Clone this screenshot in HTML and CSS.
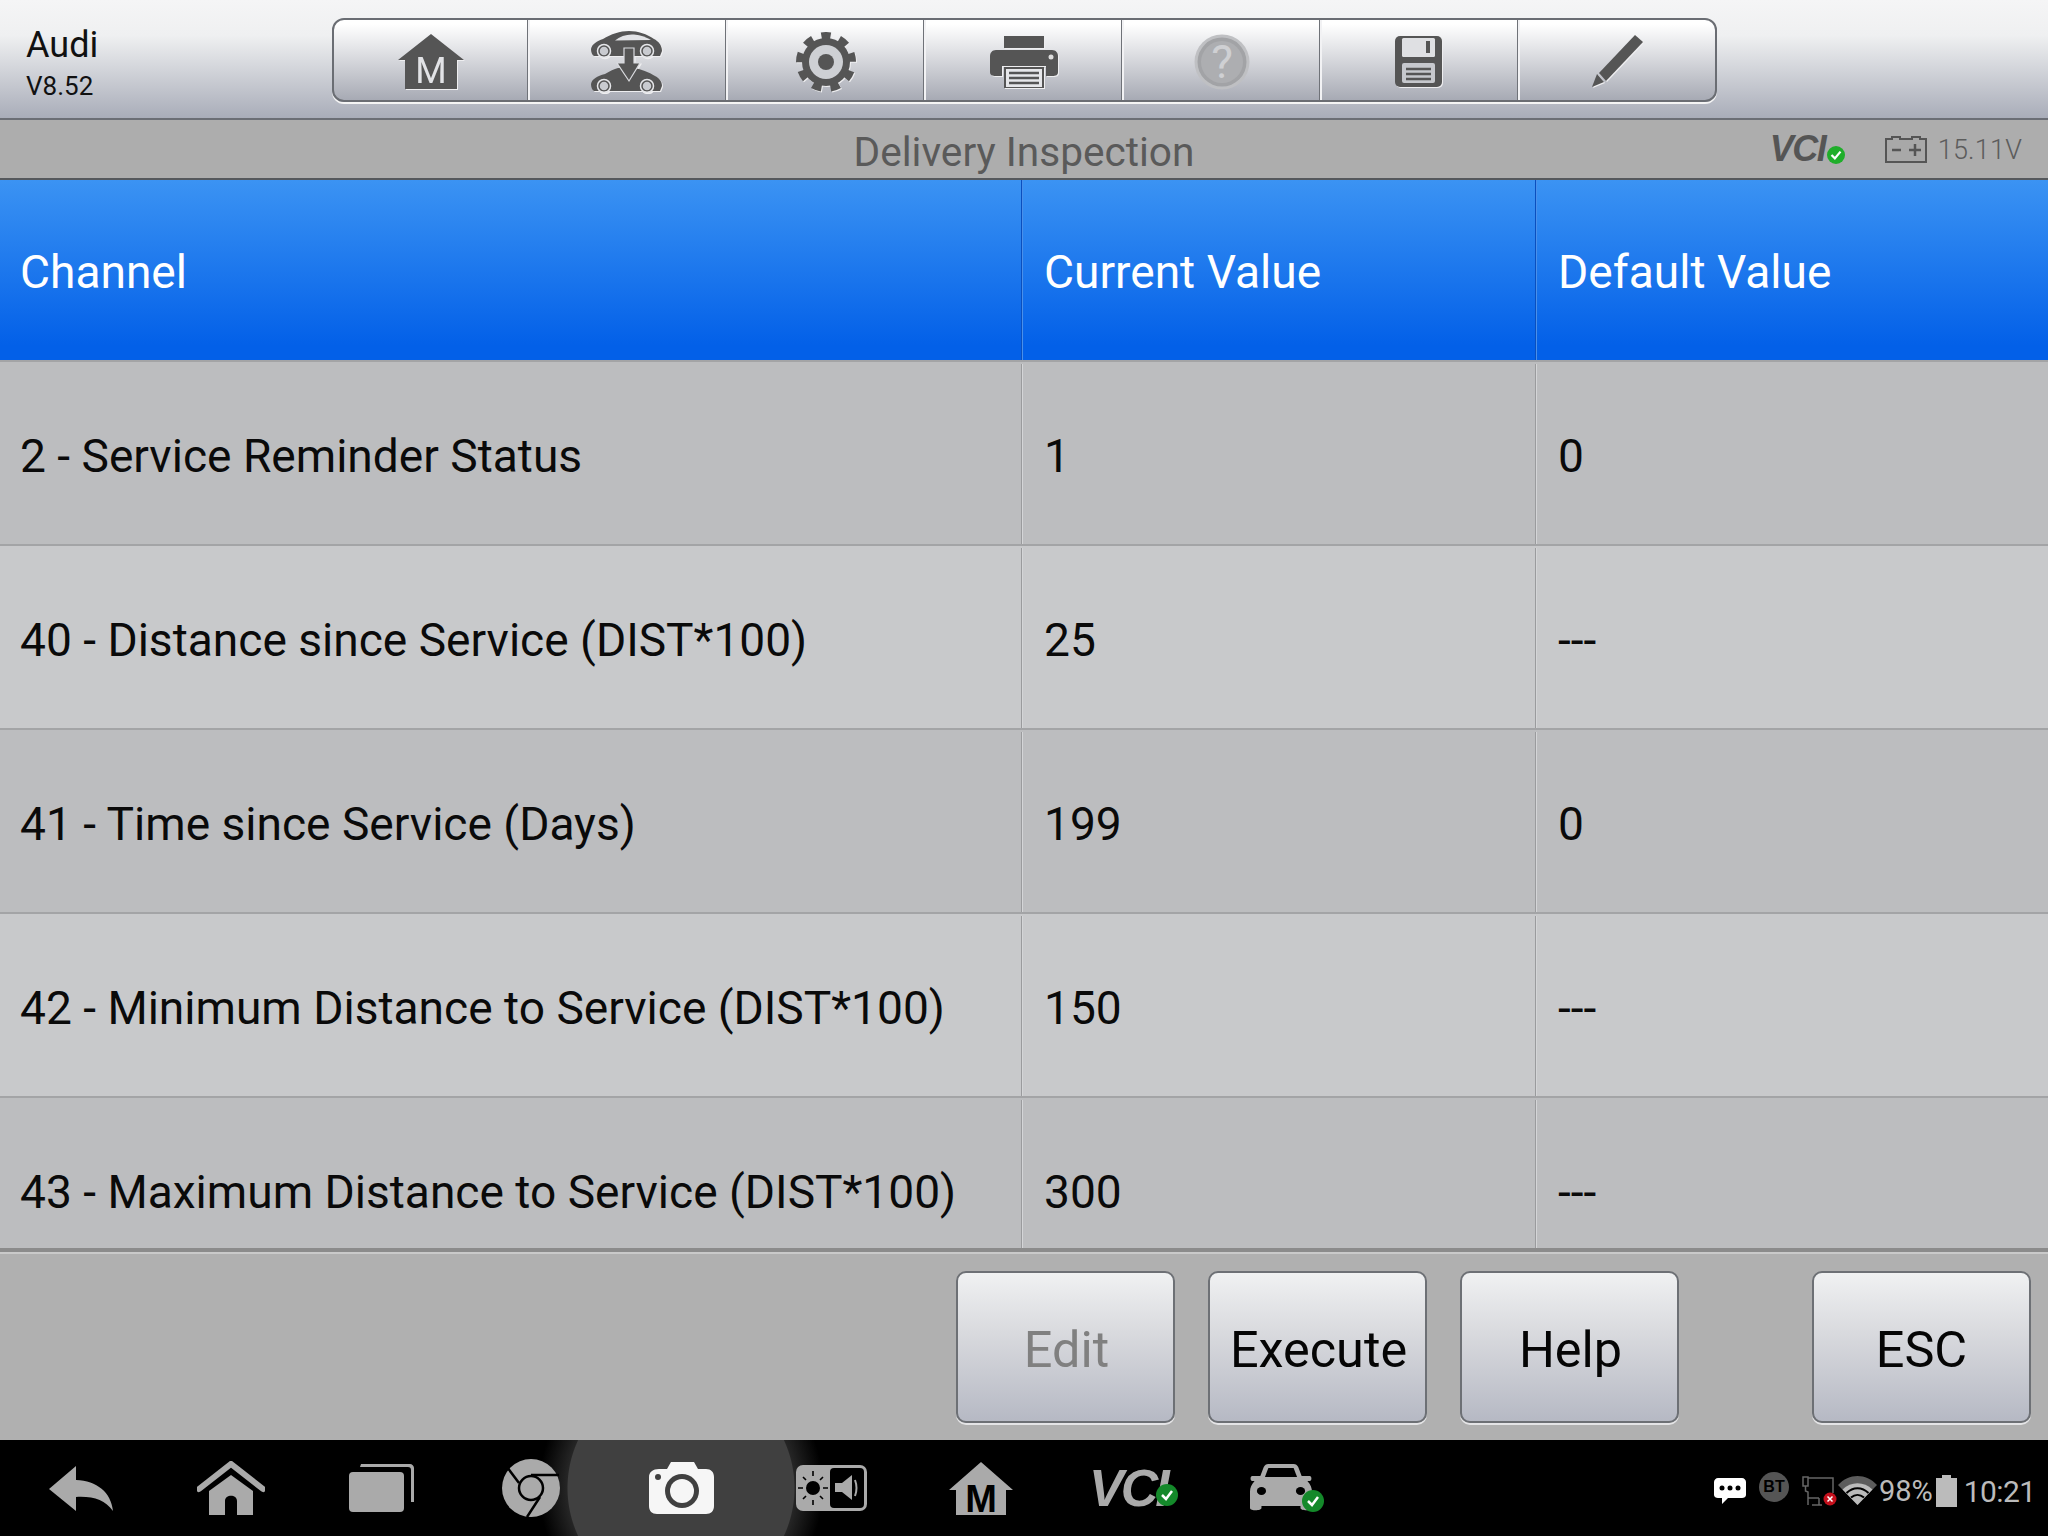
FILE: index.html
```html
<!DOCTYPE html>
<html lang="en">
<head>
<meta charset="utf-8">
<title>Delivery Inspection</title>
<link rel="stylesheet" href="styles.css">
</head>
<body>
<div class="screen">
  <header class="topbar">
    <div class="brand"><div class="brand-name">Audi</div><div class="brand-ver">V8.52</div></div>
    <div class="toolbar">
      <div class="tool"><svg class="emboss" width="66" height="64" viewBox="0 0 66 64"><path d="M33 0 L66 26 H59 V55 H7 V26 H0 Z" fill="#555"/><text x="33" y="49" text-anchor="middle" class="m-light">M</text></svg></div>
      <div class="tool"><svg class="emboss nudge" width="72" height="62" viewBox="0 0 72 62"><g fill="#555"><path d="M0 18 C1 13 6 10 12 8 C20 3 29 0 38 0 C47 0 56 3 63 8 C67 10 71 14 71 20 L69 25 H3 C1 24 0 21 0 18 Z"/><path d="M0 53 C1 48 6 45 14 43 C19 40 23 38 27 37 L42 37 C50 38 58 41 64 45 C68 47 71 50 71 55 L69 60 H3 C1 59 0 56 0 53 Z"/></g><path d="M24 9.500 C29 5 36 3 43 3.500 C50 4 56 6.500 60 9 Z" fill="#e2e3e6"/><g fill="#c9cbd0" stroke="#555" stroke-width="1.500"><circle cx="13" cy="20" r="5"/><circle cx="56" cy="20" r="5"/><circle cx="13" cy="55" r="5"/><circle cx="56" cy="55" r="5"/></g><g fill="none" stroke="#e6e7ea" stroke-width="1.500"><circle cx="13" cy="20" r="6.500"/><circle cx="56" cy="20" r="6.500"/><circle cx="13" cy="55" r="6.500"/><circle cx="56" cy="55" r="6.500"/></g><path d="M33 17 H43 V32 H49 L38 50 L26 32 H33 Z" fill="#555" stroke="#dadbdf" stroke-width="1.200"/></svg></div>
      <div class="tool"><svg class="emboss" width="60" height="60" viewBox="0 0 60 60"><circle cx="30" cy="30" r="26.500" fill="none" stroke="#555" stroke-width="7" pathLength="9" stroke-dasharray=".5 .5" transform="rotate(-100 30 30)"/><circle cx="30" cy="30" r="24" fill="#555"/><circle cx="30" cy="30" r="17" fill="#ced0d4"/><circle cx="30" cy="30" r="8" fill="#555"/></svg></div>
      <div class="tool"><svg class="emboss" width="68" height="52" viewBox="0 0 68 52"><path d="M14 0 H54 V12 H14 Z" fill="#555"/><path d="M6 14 H62 C66 14 68 17 68 20 V36 C68 39 66 40 62 40 H56 V30 H12 V40 H6 C2 40 0 39 0 36 V20 C0 17 2 14 6 14 Z" fill="#555"/><circle cx="61" cy="21" r="2.500" fill="#ddd"/><path d="M15 32 H53 V52 H15 Z" fill="#e6e7ea" stroke="#555" stroke-width="2"/><path d="M19 37 H49 M19 42 H49 M19 47 H49" stroke="#555" stroke-width="2.500"/></svg></div>
      <div class="tool"><svg width="56" height="56" viewBox="0 0 56 56"><circle cx="28" cy="28" r="27.500" fill="#bfc0c3"/><circle cx="28" cy="28" r="24.500" fill="#a2a3a6"/><circle cx="28" cy="28" r="21" fill="#adaeb1"/><text x="28" y="44" text-anchor="middle" class="q-mark">?</text></svg></div>
      <div class="tool"><svg class="emboss nudge" width="47" height="51" viewBox="0 0 47 51"><rect width="47" height="51" rx="5" fill="#555"/><rect x="7" y="2" width="33" height="19" rx="1.500" fill="#dfe0e3"/><rect x="31" y="5" width="4" height="12" fill="#555"/><rect x="7" y="27" width="33" height="20" rx="2" fill="#c6c8cd"/><path d="M11 33 H36 M11 38 H36 M11 43 H36" stroke="#555" stroke-width="2.500"/></svg></div>
      <div class="tool"><svg class="emboss" width="52" height="53" viewBox="0 0 52 53"><path d="M43 0 L51 7 L14 46 L7 38 Z" fill="#555"/><path d="M5 39 L12 47 L0 52 Z" fill="#555"/></svg></div>
    </div>
  </header>

  <div class="titlebar">
    <div class="title">Delivery Inspection</div>
    <div class="vci-state">
      <span class="logo-wrap"><span class="vci-small">VCI</span><svg class="badge-sm" width="18" height="18" viewBox="0 0 16 16"><circle cx="8" cy="8" r="8" fill="#1fae2a"/><path d="M4 8 L7 11 L12 5" fill="none" stroke="#fff" stroke-width="2"/></svg></span>
      <svg width="42" height="27" viewBox="0 0 42 27"><path d="M7 1 H15 V3 H27 V1 H35 V3 H41 V26 H1 V3 H7 Z" fill="#a8a8a8" stroke="#555" stroke-width="2"/><path d="M7 14 H16 M24 14 H36 M30 8 V20" stroke="#555" stroke-width="2.500"/></svg>
      <span class="volts">15.11V</span>
    </div>
  </div>

  <div class="grid head">
    <div class="cell">Channel</div><div class="cell">Current Value</div><div class="cell">Default Value</div>
  </div>

  <main class="rows">
    <div class="grid row"><div class="cell">2 - Service Reminder Status</div><div class="cell">1</div><div class="cell">0</div></div>
    <div class="grid row alt"><div class="cell">40 - Distance since Service (DIST*100)</div><div class="cell">25</div><div class="cell">---</div></div>
    <div class="grid row"><div class="cell">41 - Time since Service (Days)</div><div class="cell">199</div><div class="cell">0</div></div>
    <div class="grid row alt"><div class="cell">42 - Minimum Distance to Service (DIST*100)</div><div class="cell">150</div><div class="cell">---</div></div>
    <div class="grid row"><div class="cell">43 - Maximum Distance to Service (DIST*100)</div><div class="cell">300</div><div class="cell">---</div></div>
  </main>

  <div class="actions">
    <div class="btn disabled">Edit</div>
    <div class="btn">Execute</div>
    <div class="btn">Help</div>
    <div class="btn esc">ESC</div>
  </div>

  <nav class="navbar">
    <div class="slot"><svg width="64" height="45" viewBox="0 0 64 45"><path d="M27 0 V14 C48 15 62 26 64 45 C56 34 44 30 27 31 V45 L0 23 Z" fill="#aaa"/></svg></div>
    <div class="slot"><svg width="68" height="54" viewBox="0 0 68 54"><path d="M2 28 L34 3 L66 28" fill="none" stroke="#aaa" stroke-width="6" stroke-linecap="round"/><path d="M34 14 L56 30 V54 H40 V40 C40 33 28 33 28 40 V54 H12 V30 Z" fill="#aaa"/></svg></div>
    <div class="slot"><svg width="65" height="48" viewBox="0 0 65 48"><path d="M12 0 H61 C63 0 65 2 65 4 V38 H62 V6 C62 4 61 3 59 3 H11 Z" fill="#aaa"/><rect y="8" width="55" height="40" rx="4" fill="#aaa"/></svg></div>
    <div class="slot"><svg width="58" height="58" viewBox="0 0 58 58"><circle cx="29" cy="29" r="29" fill="#aaa"/><circle cx="29" cy="29" r="12" fill="#aaa" stroke="#000" stroke-width="2.500"/><path d="M29 16 H57 M17 24 L5 8 M38 38 L25 58" stroke="#000" stroke-width="2.500"/></svg></div>
    <div class="slot"><svg width="65" height="52" viewBox="0 0 65 52"><path d="M10 7 H18 L22 0 H45 L49 7 H57 C62 7 65 10 65 15 V44 C65 49 62 52 57 52 H8 C3 52 0 49 0 44 V15 C0 10 4 7 10 7 Z" fill="#f6f6f6"/><circle cx="9" cy="15" r="3" fill="#404040"/><circle cx="33" cy="29" r="17" fill="#404040"/><circle cx="33" cy="29" r="12" fill="#f6f6f6"/></svg></div>
    <div class="slot"><svg width="71" height="46" viewBox="0 0 71 46"><rect width="71" height="46" rx="7" fill="#aaa"/><rect x="34" y="3" width="34" height="40" rx="4" fill="#000"/><circle cx="17" cy="23" r="7" fill="#000"/><path d="M17 6 V11 M17 35 V40 M2 23 H7 M27 23 H32 M7 12 L10 15 M27 12 L24 15 M7 34 L10 31 M27 34 L24 31" stroke="#000" stroke-width="1.600"/><path d="M39 18 H46 L56 10 V35 L46 27 H39 Z" fill="#aaa"/><path d="M59 15 Q62 23 59 31" fill="none" stroke="#aaa" stroke-width="2"/></svg></div>
    <div class="slot"><svg class="nav-home" width="64" height="62" viewBox="0 0 64 62"><path d="M32 0 L64 28 H57 V53 H7 V28 H0 Z" fill="#aaa"/><text x="32" y="50" text-anchor="middle" class="m-dark">M</text></svg></div>
    <div class="slot"><span class="logo-wrap nav-logo"><span class="vci-big">VCI</span><svg class="badge-lg" width="22" height="22" viewBox="0 0 22 22"><circle cx="11" cy="11" r="11" fill="#14892a"/><path d="M6 11 L10 15 L16 7" fill="none" stroke="#fff" stroke-width="2.500"/></svg></span></div>
    <div class="slot"><span class="logo-wrap"><svg width="62" height="48" viewBox="0 0 62 48"><g transform="translate(-4.600 0) scale(1.148 1)"><path d="M13 12 L16 3 C17 1 18 0 20 0 H42 C44 0 45 1 46 3 L49 12 H56 C58 12 58 17 56 17 H54 C57 21 58 24 58 28 V44 C58 47 48 47 48 44 V42 H14 V44 C14 47 4 47 4 44 V28 C4 24 5 21 8 17 H6 C4 17 4 12 6 12 Z" fill="#aaa"/><path d="M17 13 L20 4 H42 L45 13 Z" fill="#000"/><circle cx="14" cy="27" r="4" fill="#000"/><circle cx="48" cy="27" r="4" fill="#000"/></g></svg><svg class="badge-car" width="22" height="22" viewBox="0 0 22 22"><circle cx="11" cy="11" r="11" fill="#14892a"/><path d="M6 11 L10 15 L16 7" fill="none" stroke="#fff" stroke-width="2.500"/></svg></span></div>
    <div class="status">
      <svg class="st-chat" width="32" height="26" viewBox="0 0 32 26"><path d="M4 0 H28 C30 0 32 2 32 4 V17 C32 19 30 20 28 20 H14 L8 26 V20 H4 C2 20 0 19 0 17 V4 C0 2 2 0 4 0 Z" fill="#fff"/><circle cx="8" cy="10" r="2.500" fill="#000"/><circle cx="16" cy="10" r="2.500" fill="#000"/><circle cx="24" cy="10" r="2.500" fill="#000"/></svg>
      <span class="st-bt">BT</span>
      <svg class="st-plug" width="36" height="31" viewBox="0 0 36 31"><g fill="none" stroke="#666" stroke-width="1.500"><rect x="1" y="2" width="5" height="9"/><path d="M3.500 11 V16 L6 17 V30 M6 3 H31 V18 M6 23 H17 M10 30 H20 M17 23 V30"/></g><circle cx="28" cy="24" r="6.500" fill="#c4101c"/><path d="M25.500 21.500 L30.500 26.500 M30.500 21.500 L25.500 26.500" stroke="#fff" stroke-width="1.500"/></svg>
      <svg class="st-wifi" width="39" height="29" viewBox="0 0 39 29"><path d="M19.500 29 L0 9 C11 -3 28 -3 39 9 Z" fill="#5c5c5c"/><path d="M19.500 29 L4.500 13.500 C13 5 26 5 34.500 13.500 Z" fill="#bbb"/><path d="M8.500 17 C15 10.500 24 10.500 30.500 17" fill="none" stroke="#000" stroke-width="2"/><path d="M13 21.500 C17 18 22 18 26 21.500" fill="none" stroke="#000" stroke-width="2"/></svg>
      <span class="st-pct">98%</span>
      <svg class="st-batt" width="21" height="32" viewBox="0 0 21 32"><path d="M6 0 H15 V3 H21 V32 H0 V3 H6 Z" fill="#bbb"/></svg>
      <span class="st-time">10:21</span>
    </div>
  </nav>
</div>
</body>
</html>
```
FILE: styles.css
```css
* { box-sizing: border-box; }
html, body { margin: 0; padding: 0; background: #000; }
.screen {
  width: 2048px;
  height: 1536px;
  overflow: hidden;
  font-family: Roboto, "Liberation Sans", sans-serif;
  display: flex;
  flex-direction: column;
}

/* top bar */
.topbar {
  flex: none;
  height: 120px;
  border-bottom: 2px solid #6b6e75;
  background: linear-gradient(#f5f5f6 0%, #eff0f1 30%, #a9adb9 100%);
  display: flex;
  align-items: flex-start;
}
.brand { width: 332px; padding: 23px 0 0 26px; color: #111; }
.brand-name { font-size: 36px; line-height: 44px; }
.brand-ver { font-size: 26px; line-height: 34px; margin-top: 2px; }
.toolbar {
  margin-top: 18px;
  width: 1385px;
  height: 84px;
  display: flex;
  border: 2px solid #6a6d73;
  border-radius: 12px;
  background: linear-gradient(#fff 5%, #e4e5e8 35%, #a7aab4 100%);
  box-shadow: 0 2px 0 #f4f4f4;
}
.tool {
  flex: none;
  width: 198px;
  padding-top: 3px;
  display: flex;
  align-items: center;
  justify-content: center;
  border-left: 2px solid #f2f2f4;
  box-shadow: -1px 0 0 #6f7278;
}
.tool:first-child { width: 194px; border-left: 0; box-shadow: none; }
.tool:first-child svg { margin-bottom: -9px; }
.tool:last-child { width: 197px; }
.nudge { margin-right: 3px; }
.emboss { filter: drop-shadow(1px 1px 0 #eeeef0); }
.m-light { font: 400 36px Roboto, sans-serif; fill: #e2e3e6; }
.m-dark { font: 700 38px "Liberation Sans", sans-serif; fill: #000; }
.q-mark { font: 400 46px Roboto, sans-serif; fill: #cfd0d3; }

/* title bar */
.titlebar {
  flex: none;
  height: 60px;
  border-bottom: 2px solid #55585c;
  background: #adadad;
  position: relative;
  display: flex;
  align-items: center;
  justify-content: flex-end;
  padding-right: 26px;
}
.title {
  position: absolute;
  left: 0;
  right: 0;
  text-align: center;
  font-size: 40.600px;
  line-height: 58px;
  padding-top: 5px;
  color: #5a5a5a;
}
.vci-state { display: flex; align-items: center; position: relative; }
.logo-wrap { position: relative; display: inline-flex; }
.vci-small { font: italic 700 36px/40px "Liberation Sans", sans-serif; color: #555; letter-spacing: -1.500px; width: 72px; margin-right: 43px; }
.badge-sm { position: absolute; left: 57px; top: 17px; }
.volts { font-size: 27px; font-weight: 300; color: #5c5c5c; margin-left: 11px; letter-spacing: .2px; padding-top: 2px; }

/* table */
.grid {
  display: grid;
  grid-template-columns: 1022px 514px 512px;
}
.head {
  flex: none;
  height: 180px;
  background: linear-gradient(#3b93f3 0%, #0360e8 92%);
  color: #fff;
  font-size: 46.100px;
}
.head .cell { border-right-color: #0a4fbe; border-left-color: #4a90ea; }
.cell {
  display: flex;
  align-items: center;
  padding: 3px 0 0 20px;
  border-right: 1px solid #9a9b9d;
  border-left: 1px solid #d4d5d7;
  white-space: nowrap;
}
.cell:first-child { border-left: 0; }
.cell:not(:first-child) { padding-left: 21px; }
.cell:last-child { border-right: 0; }
.rows {
  flex: none;
  height: 892px;
  overflow: hidden;
  border-bottom: 4px solid #8b8b8b;
  box-shadow: 0 2px 0 #c9c9c9;
  position: relative;
}
.row {
  height: 184px;
  padding: 2px 0 0;
  border-top: 2px solid #a3a4a6;
  background: #bcbdbf;
  color: #0a0a0a;
  font-size: 46.100px;
}
.row.alt { background: #c8c9cb; }

/* actions */
.actions {
  flex: none;
  height: 188px;
  background: #b0b0b0;
  display: flex;
  justify-content: flex-end;
  gap: 33px;
  padding: 19px 17px 0 0;
}
.btn {
  width: 219px;
  height: 152px;
  border: 2px solid #6d7075;
  border-radius: 10px;
  background: linear-gradient(#f0f1f2 0%, #d9dade 40%, #b6b9c4 100%);
  box-shadow: 0 2px 0 #e4e4e6;
  display: flex;
  align-items: center;
  justify-content: center;
  padding: 5px 0 0 2px;
  font-size: 50.400px;
  color: #050505;
}
.btn.disabled { color: #808080; }
.btn.esc { margin-left: 100px; padding-left: 0; }

/* navigation */
.navbar {
  flex: none;
  height: 96px;
  display: flex;
  padding-left: 6px;
  align-items: center;
  background: radial-gradient(circle at 681px 48px, #404040 113px, #252525 114px, #000 142px);
}
.slot { flex: none; width: 150px; display: flex; justify-content: center; align-items: center; }
.nav-home { margin-bottom: -9px; }
.vci-big { font: italic 700 52px/50px "Liberation Sans", sans-serif; color: #aaa; letter-spacing: -3px; width: 84px; }
.badge-lg { position: absolute; left: 67px; top: 21px; }
.badge-car { position: absolute; left: 52px; top: 26px; }
.status {
  margin-left: auto;
  display: flex;
  align-items: center;
  color: #bbb;
  width: 334px;
  height: 96px;
  position: relative;
}
.st-chat { margin-right: 13px; margin-top: 6px; }
.st-bt {
  width: 30px;
  height: 30px;
  border-radius: 50%;
  background: #555;
  color: #000;
  font: 700 16px/30px "Liberation Sans", sans-serif;
  text-align: center;
  margin-right: 13px;
  margin-top: -2px;
}
.st-plug { margin-top: 4px; }
.st-wifi { margin-right: 2px; margin-top: 4px; }
.st-pct { font-size: 29px; margin-right: 3px; margin-top: 6px; }
.st-batt { margin-right: 7px; margin-top: 6px; }
.st-time { font-size: 30px; letter-spacing: -.6px; margin-top: 6px; }
```
